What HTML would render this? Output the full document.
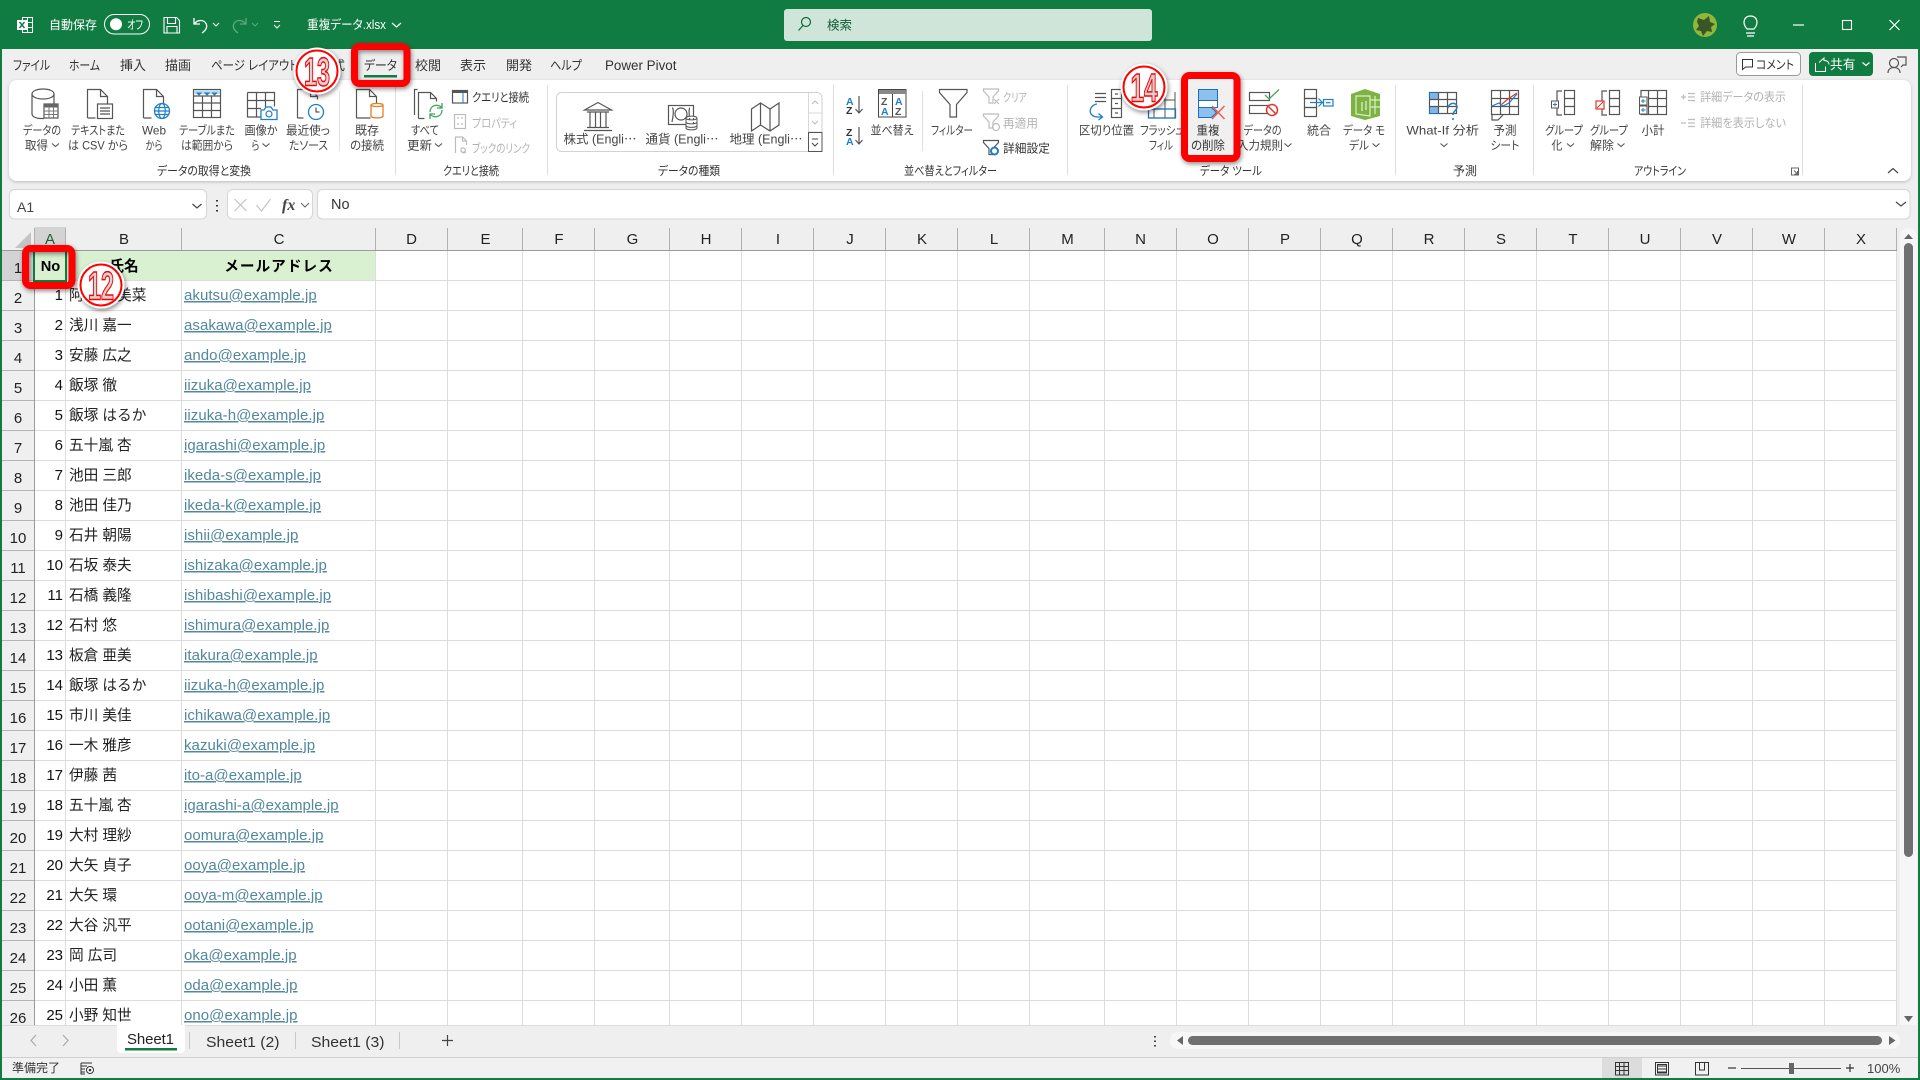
<!DOCTYPE html>
<html lang="ja"><head><meta charset="utf-8"><title>重複データ.xlsx - Excel</title>
<style>
html,body{margin:0;padding:0;background:#efefef;width:1920px;height:1080px;overflow:hidden}
svg{display:block}
text{font-family:"Liberation Sans","Noto Sans CJK JP",sans-serif;font-feature-settings:"palt";font-size:12px;fill:#333}
.c{text-anchor:middle}
.g{fill:#b3b3b3}
.tab{font-size:13px;fill:#333}
.w{fill:#fff}
.lbl{font-size:12px;fill:#444;text-anchor:middle}
.hd{font-size:15px;fill:#222;text-anchor:middle}
.rh{font-size:15px;fill:#222;text-anchor:middle}
.n{font-size:15px;fill:#111;text-anchor:end}
.nm{font-size:14.67px;fill:#222;font-feature-settings:normal}
.em{font-size:15px;fill:#52879c;text-decoration:underline;letter-spacing:.05px}
.b{font-size:14.67px;font-weight:700;fill:#000;text-anchor:middle;font-feature-settings:normal}
.i{fill:none;stroke:#555;stroke-width:1.2}
.if{fill:#fff;stroke:#555;stroke-width:1.2}
.dim{fill:none;stroke:#bdbdbd;stroke-width:1.2}
.bl{fill:none;stroke:#1e7ec8;stroke-width:1.2}
.cv{fill:none;stroke:#555;stroke-width:1.1}
.sh{font-size:15px;fill:#333}
.ann{font-family:"Liberation Sans",sans-serif;font-size:40px;font-weight:700;fill:#d4d4d4;stroke:#f00;stroke-width:1.5;text-anchor:middle;font-feature-settings:normal}
</style></head><body>
<svg width="1920" height="1080" viewBox="0 0 1920 1080" xmlns="http://www.w3.org/2000/svg">
<defs>
<filter id="s1" x="-5%" y="-20%" width="110%" height="150%"><feDropShadow dx="0" dy="1" stdDeviation="1.5" flood-color="#000" flood-opacity=".22"/></filter>
<filter id="s2" x="-30%" y="-30%" width="160%" height="160%"><feDropShadow dx="1" dy="2" stdDeviation="2.5" flood-color="#000" flood-opacity=".45"/></filter>
<clipPath id="gc"><rect x="0" y="250" width="1897" height="775"/></clipPath>
<path id="cd" class="cv" d="M-3.5-1.5 0 1.5 3.5-1.5"/>
</defs>
<rect width="1920" height="1080" fill="#efefef"/>

<!-- title bar -->
<rect width="1920" height="49" fill="#107c41"/>
<rect x="22.5" y="17.5" width="10" height="15" fill="none" stroke="#fff"/><path d="M22 22.5h11M22 27.5h11M27.5 17v16" stroke="#fff" fill="none"/>
<rect x="17" y="20" width="10" height="10" fill="#fff"/><path d="M19.5 22l5 6M24.5 22l-5 6" stroke="#107c41" stroke-width="1.4"/>
<text class="w" x="49" y="29" textLength="48" lengthAdjust="spacingAndGlyphs">自動保存</text>
<rect x="104.5" y="14.5" width="45" height="19.5" rx="9.7" fill="none" stroke="#fff"/>
<circle cx="116" cy="24.3" r="6" fill="#fff"/>
<text class="w" x="127" y="29" textLength="16" lengthAdjust="spacingAndGlyphs">オフ</text>
<path d="M164 17.5h12.5l3 3v12.5h-15.5zM167.5 17.5v6h8v-6M167 33v-6.5h10V33" fill="none" stroke="#fff" stroke-width="1.1"/>
<path d="M194 18v6h6M194.5 24c2-4 9-5 11.5-.5 2 4-.5 7-4 9.5" fill="none" stroke="#fff" stroke-width="1.3"/>
<path d="M213 23l3 3 3-3" fill="none" stroke="#fff"/>
<path d="M246 18v6h-6M245.5 24c-2-4-9-5-11.5-.5-2 4 .5 7 4 9.5" fill="none" stroke="#5da983" stroke-width="1.3"/>
<path d="M252 23l3 3 3-3" fill="none" stroke="#5da983"/>
<path d="M274 21.5h6M274 25l3 3 3-3" fill="none" stroke="#fff"/>
<text class="w" x="307" y="29" style="font-size:12.5px" textLength="79" lengthAdjust="spacingAndGlyphs">重複データ.xlsx</text>
<path d="M392 23l4.5 4 4.5-4" fill="none" stroke="#fff" stroke-width="1.2"/>
<rect x="784" y="9" width="368" height="32" rx="3" fill="#cfe5d9"/>
<circle cx="806" cy="22" r="4.5" fill="none" stroke="#0f6a39" stroke-width="1.2"/><path d="M803 25.5l-4.5 5" stroke="#0f6a39" stroke-width="1.2"/>
<text x="827" y="29.5" style="fill:#0f5c33;font-size:12.5px">検索</text>
<circle cx="1705" cy="25" r="12" fill="#8fb83a"/><path d="M1698 18l6 2 5-4 1 6 5 2-4 3 1 5-5-1-4 5-2-5-5-1 3-4-2-4zM1701 29l3-7 4 7z" fill="#3a5626"/>
<path d="M1746 33h9M1747 36h7M1747 29c-6-7-2-13 3.5-13s9.5 6 3.5 13z" fill="none" stroke="#fff" stroke-width="1.2"/>
<path d="M1793 25h11" stroke="#fff" stroke-width="1.2"/>
<rect x="1842.5" y="20.5" width="9" height="9" fill="none" stroke="#fff" stroke-width="1.1"/>
<path d="M1889.5 20l10 10M1899.5 20l-10 10" stroke="#fff" stroke-width="1.2"/>

<!-- tabs -->
<text class="tab" x="13" y="70" textLength="37" lengthAdjust="spacingAndGlyphs">ファイル</text>
<text class="tab" x="69" y="70" textLength="31" lengthAdjust="spacingAndGlyphs">ホーム</text>
<text class="tab" x="120" y="70" textLength="26" lengthAdjust="spacingAndGlyphs">挿入</text>
<text class="tab" x="165" y="70" textLength="26" lengthAdjust="spacingAndGlyphs">描画</text>
<text class="tab" x="211" y="70" textLength="87" lengthAdjust="spacingAndGlyphs">ページ レイアウト</text>
<text class="tab" x="319" y="70" textLength="26" lengthAdjust="spacingAndGlyphs">数式</text>
<text class="tab" x="364" y="70" textLength="33" lengthAdjust="spacingAndGlyphs">データ</text>
<rect x="364" y="75" width="33" height="2.5" fill="#107c41"/>
<text class="tab" x="415" y="70" textLength="26" lengthAdjust="spacingAndGlyphs">校閲</text>
<text class="tab" x="460" y="70" textLength="26" lengthAdjust="spacingAndGlyphs">表示</text>
<text class="tab" x="506" y="70" textLength="26" lengthAdjust="spacingAndGlyphs">開発</text>
<text class="tab" x="550" y="70" textLength="32" lengthAdjust="spacingAndGlyphs">ヘルプ</text>
<text x="605" y="70" style="font-size:13.4px;fill:#333">Power Pivot</text>
<rect x="1736.5" y="52.5" width="64" height="23" rx="4" fill="#fff" stroke="#9a9a9a"/>
<path d="M1742.5 59.5h10v7.5h-7l-3 2.5z" fill="none" stroke="#333"/>
<text x="1756" y="69" style="font-size:12.5px" textLength="38" lengthAdjust="spacingAndGlyphs">コメント</text>
<rect x="1809" y="52" width="64" height="24" rx="4" fill="#107c41"/>
<path d="M1819 62.5l5-4.5v2.5c3 0 5 1 5 4M1815.5 63v8.5h10v-5" fill="none" stroke="#fff"/>
<text class="w" x="1830" y="69" style="font-size:13px" textLength="25.5" lengthAdjust="spacingAndGlyphs">共有</text>
<path d="M1862.5 62.5l3.5 3 3.5-3" fill="none" stroke="#fff" stroke-width="1.2"/>
<circle cx="1894" cy="63" r="4.5" class="i"/><path d="M1888 73c0-4 3-5.5 6-5.5s6 1.5 6 5.5M1897 57h9v8h-3l-2 2" class="i"/>

<!-- ribbon -->
<rect x="9" y="80" width="1902" height="101" rx="8" fill="#fff" filter="url(#s1)"/>
<path d="M395.5 85v90M547.5 85v90M833.5 85v90M1067.5 85v90M1395.5 85v90M1533.5 85v90M1802.5 85v90" stroke="#dcdcdc"/>
<path d="M339.5 91v60M922.5 91v60" stroke="#e0e0e0"/>

<!-- get data icons -->
<path d="M32 94v20c0 3 5 4.5 8 4.5h4M32 94c0-3 5-5 11-5s11 2 11 5v10M32 94c0 3 5 5 11 5s11-2 11-5" class="i"/>
<rect x="44" y="104" width="14" height="14" class="if"/><rect x="44" y="104" width="14" height="3.5" fill="#666"/><path d="M44 111h14M44 114.5h14M49 107v11M53.5 107v11" stroke="#777" fill="none"/>
<path d="M87.5 118V89.5h13l7 7v7M100.5 89.5v7h7M87.5 118h8" class="i"/>
<rect x="96" y="104" width="17" height="14" fill="#fff"/><rect x="97.5" y="104" width="15" height="14.5" class="i"/><path d="M100 108h10M100 111h10M100 114h10" class="i"/>
<path d="M143.5 118V89.5h13l7 7v7M156.5 89.5v7h7M143.5 118h8" class="i"/>
<circle cx="162" cy="111" r="7.5" fill="#fff" stroke="#1e7ec8" stroke-width="1.3"/><ellipse cx="162" cy="111" rx="3.3" ry="7.5" class="bl"/><path d="M154.5 111h15M155.5 107.5h13M155.5 114.5h13" class="bl"/>
<rect x="193.5" y="89.5" width="27" height="28" class="i"/><rect x="194" y="90" width="26" height="4" fill="#bcdcf0"/>
<path d="M196.5 92.5l2.5 2.5 2.5-2.5M204.5 92.5l2.5 2.5 2.5-2.5M212 92.5l2.5 2.5 2.5-2.5" fill="#1e7ec8" stroke="#1e7ec8"/>
<path d="M193 96h28M193 103h28M193 110.5h28M202.5 96v22M211.5 96v22" class="i"/>
<path d="M247.5 92.5h27v14M247.5 92.5v24.5h14M247 100.5h28M247 108.5h14M256.5 92v25M265.5 92v15" class="i"/>
<path d="M261 110h3l2-3h5l2 3h4v9.5h-16z" fill="#fff" stroke="#1e7ec8" stroke-width="1.3"/><circle cx="269" cy="114" r="3" class="bl"/>
<path d="M297.5 118V89.5h13l7 7v3M310.5 89.5v7h7M297.5 118h6" class="i"/>
<circle cx="316" cy="112" r="7.5" fill="#fff" stroke="#1e7ec8" stroke-width="1.3"/><path d="M316 107.5v4.5h3.5" stroke="#333" fill="none"/>
<path d="M356.5 118V89.5h13l7 7v7M369.5 89.5v7h7M356.5 118h14" class="i"/>
<path d="M371 105c0-2 12-2 12 0v11c0 2.5-12 2.5-12 0z" fill="#fff" stroke="#e67e22" stroke-width="1.3"/><path d="M371 105c0 2 12 2 12 0" stroke="#e67e22" fill="none" stroke-width="1.3"/>
<path d="M414.5 115V89.5h3" class="i"/><path d="M418.5 118.5V92.5h12l6 6v3M430.5 92.5v6h6M418.5 118.5h6" class="i"/>
<path d="M430 112c0-7 8-9 12-4M442 110c0 7-8 9-12 4M442 103v5h-5M430 119v-5h5" fill="none" stroke="#3aa655" stroke-width="1.3"/>

<text class="lbl" x="42" y="134.5" textLength="38" lengthAdjust="spacingAndGlyphs">データの</text><text class="lbl" x="36.5" y="149.5" textLength="23" lengthAdjust="spacingAndGlyphs">取得</text><use href="#cd" x="55.5" y="145"/>
<text class="lbl" x="98" y="134.5" textLength="54" lengthAdjust="spacingAndGlyphs">テキストまた</text><text class="lbl" x="98" y="149.5" textLength="60" lengthAdjust="spacingAndGlyphs">は CSV から</text>
<text class="lbl" x="154" y="134.5" textLength="24" lengthAdjust="spacingAndGlyphs">Web</text><text class="lbl" x="154" y="149.5" textLength="17" lengthAdjust="spacingAndGlyphs">から</text>
<text class="lbl" x="207" y="134.5" textLength="56" lengthAdjust="spacingAndGlyphs">テーブルまた</text><text class="lbl" x="207" y="149.5" textLength="52" lengthAdjust="spacingAndGlyphs">は範囲から</text>
<text class="lbl" x="261" y="134.5" textLength="33" lengthAdjust="spacingAndGlyphs">画像か</text><text class="lbl" x="255.5" y="149.5" textLength="8" lengthAdjust="spacingAndGlyphs">ら</text><use href="#cd" x="266" y="145"/>
<text class="lbl" x="308" y="134.5" textLength="44" lengthAdjust="spacingAndGlyphs">最近使っ</text><text class="lbl" x="308.5" y="149.5" textLength="39" lengthAdjust="spacingAndGlyphs">たソース</text>
<text class="lbl" x="367" y="134.5" textLength="24" lengthAdjust="spacingAndGlyphs">既存</text><text class="lbl" x="367" y="149.5" textLength="34" lengthAdjust="spacingAndGlyphs">の接続</text>
<text class="lbl" x="425" y="134.5" textLength="28" lengthAdjust="spacingAndGlyphs">すべて</text><text class="lbl" x="419.5" y="149.5" textLength="25" lengthAdjust="spacingAndGlyphs">更新</text><use href="#cd" x="438.5" y="145"/>
<rect x="452.5" y="90.5" width="15" height="12.5" class="i"/><rect x="452.5" y="90.5" width="15" height="2.5" fill="#555"/><path d="M463 93v10" stroke="#1e7ec8"/>
<text x="472" y="101.5" textLength="57" lengthAdjust="spacingAndGlyphs">クエリと接続</text>
<rect x="454.5" y="114.5" width="11" height="14" class="dim"/><path d="M457 118h2M457 124h2M461 118h2M461 124h2" class="dim"/>
<text class="g" x="472" y="127.5" textLength="45" lengthAdjust="spacingAndGlyphs">プロパティ</text>
<path d="M455.5 153v-16h7l4 4v4M462.5 137v4h4M462 152c2 1 4-1 3-3s-4-1-4 1 2 4 5 2" class="dim"/>
<text class="g" x="472" y="152.5" textLength="58" lengthAdjust="spacingAndGlyphs">ブックのリンク</text>
<text class="c" x="204" y="175" textLength="94" lengthAdjust="spacingAndGlyphs">データの取得と変換</text>
<text class="c" x="471" y="175" textLength="56" lengthAdjust="spacingAndGlyphs">クエリと接続</text>

<!-- data types gallery -->
<rect x="556.5" y="92.5" width="265.5" height="59" rx="5" fill="#fff" stroke="#d2d2d2"/>
<path d="M808.5 93v58M808 113h14M808 132h14" stroke="#d8d8d8"/>
<path d="M812 104l3-3 3 3M812 121l3 3 3-3" fill="none" stroke="#bbb"/>
<rect x="808.5" y="132.5" width="13.5" height="19" fill="#fff" stroke="#555"/><path d="M812 139h6M812 143l3 3 3-3" fill="none" stroke="#444"/>
<path d="M584.5 110l13.5-7.5 13.5 7.5zM587 112h22M587 127.5h22M584 130.5h28M590 112v15M595.5 112v15M600.5 112v15M606 112v15" class="i"/>
<rect x="668.5" y="105.5" width="25" height="19" class="i"/><path d="M672 108c3 0 0 14 0 14M690 108c-2 0 0 14 0 14" class="i"/><circle cx="681" cy="114" r="6" class="i"/>
<path d="M686 118c0-2.5 11-2.5 11 0v10c0 2.5-11 2.5-11 0zM686 118c0 2.5 11 2.5 11 0M686 122c0 2.5 11 2.5 11 0M686 125.5c0 2.5 11 2.5 11 0" fill="#fff" stroke="#555"/>
<path d="M751.5 109l9-6 9.5 6 9-6v22l-9 6-9.5-6-9 6zM760.5 103v22M770 109v22" class="i"/>
<text class="lbl" x="600" y="143.5" style="font-size:12.5px">株式 (Engli⋯</text>
<text class="lbl" x="682" y="143.5" style="font-size:12.5px">通貨 (Engli⋯</text>
<text class="lbl" x="766" y="143.5" style="font-size:12.5px">地理 (Engli⋯</text>
<text class="c" x="689" y="175" textLength="62" lengthAdjust="spacingAndGlyphs">データの種類</text>

<!-- sort & filter -->
<text x="846" y="105" style="font-size:10.5px;fill:#1e7ec8;font-weight:700">A</text><text x="846" y="114" style="font-size:10.5px;fill:#333;font-weight:700">Z</text>
<path d="M859 96v17M855.5 109l3.5 4 3.5-4" class="i"/>
<text x="846" y="136" style="font-size:10.5px;fill:#333;font-weight:700">Z</text><text x="846" y="145" style="font-size:10.5px;fill:#1e7ec8;font-weight:700">A</text>
<path d="M859 127v17M855.5 140l3.5 4 3.5-4" class="i"/>
<rect x="878.5" y="89.5" width="27.5" height="27.5" fill="#fff" stroke="#444"/><rect x="879" y="90" width="27" height="4" fill="#888"/><path d="M892.5 94v23" stroke="#444"/>
<text x="881" y="105" style="font-size:10.5px;font-weight:700;fill:#555">Z</text><text x="881" y="115" style="font-size:10.5px;font-weight:700;fill:#1e7ec8">A</text>
<text x="895" y="105" style="font-size:10.5px;font-weight:700;fill:#1e7ec8">A</text><text x="895" y="115" style="font-size:10.5px;font-weight:700;fill:#555">Z</text>
<text class="lbl" x="892" y="134.5" textLength="43" lengthAdjust="spacingAndGlyphs">並べ替え</text>
<path d="M939.5 89.5h27.5v3l-10.5 12v12.5h-6.5v-12.5l-10.5-12z" class="if"/>
<text class="lbl" x="952" y="134.5" textLength="42" lengthAdjust="spacingAndGlyphs">フィルター</text>
<path d="M983.5 89h15v2l-5.5 6v6h-4v-6l-5.5-6z" class="dim"/><path d="M994 99l5 5M999 99l-5 5" class="dim"/>
<text class="g" x="1003" y="101.5" textLength="24" lengthAdjust="spacingAndGlyphs">クリア</text>
<path d="M983.5 114h15v2l-5.5 6v6h-4v-6l-5.5-6z" class="dim"/><circle cx="996" cy="127" r="3.5" class="dim"/>
<text class="g" x="1003" y="127.5" textLength="35" lengthAdjust="spacingAndGlyphs">再適用</text>
<path d="M983.5 140.5h15v2l-5.5 6v6h-4v-6l-5.5-6z" class="i"/><circle cx="994.5" cy="151" r="3.5" fill="#fff" stroke="#1e7ec8" stroke-width="2"/>
<text x="1003" y="152.5" textLength="47" lengthAdjust="spacingAndGlyphs">詳細設定</text>
<text class="c" x="950.5" y="175" textLength="93" lengthAdjust="spacingAndGlyphs">並べ替えとフィルター</text>

<!-- data tools -->
<path d="M1095 93.5h11M1095 97.5h11M1095 101.5h11" class="i"/>
<path d="M1097 104c-8 1-10 12 0 13h5M1098.5 113.5l4 3.5-4 3" fill="none" stroke="#1e7ec8" stroke-width="1.3"/>
<rect x="1111.5" y="89.5" width="10" height="28" class="i"/><path d="M1111 98.5h11M1111 108.5h11M1115 94h3M1115 103.5h3M1115 113h3" class="i"/>
<text class="lbl" x="1106.5" y="134.5" textLength="55" lengthAdjust="spacingAndGlyphs">区切り位置</text>
<path d="M1154 92v26M1165 92v26M1154 100h21M1154 109h21M1175 92v26" fill="none" stroke="#555"/><rect x="1148.5" y="109" width="27" height="9" fill="none" stroke="#1d6fb8" stroke-width="1.3"/>
<text class="lbl" x="1162" y="134.5" textLength="44" lengthAdjust="spacingAndGlyphs">フラッシュ</text><text class="lbl" x="1161" y="149.5" textLength="24" lengthAdjust="spacingAndGlyphs">フィル</text>

<!-- validation / consolidate / model -->
<rect x="1249.5" y="92.5" width="20" height="8" class="i"/><path d="M1265 95l4 4 10-9.5" fill="none" stroke="#4aa564" stroke-width="1.3"/>
<rect x="1249.5" y="105.5" width="20" height="8" class="i"/><circle cx="1272" cy="110" r="5.5" fill="#fff" stroke="#e0352b" stroke-width="1.5"/><path d="M1268.5 106.5l7 7" stroke="#e0352b" stroke-width="1.5"/>
<text class="lbl" x="1262.5" y="134.5" textLength="38" lengthAdjust="spacingAndGlyphs">データの</text><text class="lbl" x="1260" y="149.5" textLength="46" lengthAdjust="spacingAndGlyphs">入力規則</text><use href="#cd" x="1288" y="145"/>
<rect x="1304.5" y="89.5" width="12" height="9" class="i"/><rect x="1304.5" y="98.5" width="12" height="9" class="i"/><rect x="1304.5" y="107.5" width="12" height="9" class="i"/>
<path d="M1310 102.5h12M1318.5 98.5l4 4-4 4" class="bl"/><rect x="1323.5" y="99.5" width="9.5" height="6.5" class="bl"/><path d="M1326 102.7h4.5" class="bl"/>
<text class="lbl" x="1319" y="134.5" textLength="24" lengthAdjust="spacingAndGlyphs">統合</text>
<path d="M1351 94l14-5 15 5v22l-15 4-14-4z" fill="#7cb342"/><path d="M1356 96l14 0v20l-14-2zM1370 100h10M1370 107h10M1375 96v18" fill="none" stroke="#dcedc8" stroke-width="1.2"/><path d="M1362 102v9M1366 101v9" stroke="#fff"/>
<text class="lbl" x="1364" y="134.5" textLength="42" lengthAdjust="spacingAndGlyphs">データ モ</text><text class="lbl" x="1359" y="149.5" textLength="20" lengthAdjust="spacingAndGlyphs">デル</text><use href="#cd" x="1376" y="145"/>
<text class="c" x="1231" y="175" textLength="62" lengthAdjust="spacingAndGlyphs">データ ツール</text>

<!-- forecast -->
<rect x="1429.5" y="92.5" width="27" height="21" class="i"/><rect x="1429.5" y="92.5" width="9" height="7" fill="#7fb6e6" stroke="#1e6fb8"/><rect x="1429.5" y="106.5" width="9" height="7" fill="#7fb6e6" stroke="#1e6fb8"/><path d="M1429 99.5h27M1429 106.5h27M1438.5 92v21M1447.5 92v21" class="i"/>
<path d="M1448 108c1-6 9-6 9-1 0 4-4 3.5-4 8M1453 118v2" fill="none" stroke="#1e7ec8" stroke-width="1.5"/>
<text class="lbl" x="1442.7" y="134.5" textLength="72.5" lengthAdjust="spacingAndGlyphs">What-If 分析</text><use href="#cd" x="1444" y="145"/>
<rect x="1491.5" y="90.5" width="27" height="24" class="i"/><path d="M1491 98.5h27M1491 106.5h27M1500.5 90v24M1509.5 90v24M1492 115v5h6l5-5" class="i"/>
<path d="M1492 106l7-3 4 3 6-3 8-9" fill="none" stroke="#1e7ec8" stroke-width="1.2"/><path d="M1502 104l6-5 9-6" fill="none" stroke="#e0352b" stroke-width="1.2"/>
<text class="lbl" x="1505" y="134.5" textLength="23" lengthAdjust="spacingAndGlyphs">予測</text><text class="lbl" x="1505" y="149.5" textLength="29" lengthAdjust="spacingAndGlyphs">シート</text>
<text class="c" x="1465" y="175" textLength="24" lengthAdjust="spacingAndGlyphs">予測</text>

<!-- outline -->
<path d="M1562 91h-5v10M1557 108v7h5" class="i"/><rect x="1551.5" y="101" width="7" height="7" fill="#fff" stroke="#555"/><path d="M1553 104.5h4M1555 102.5v4" stroke="#1e7ec8"/>
<rect x="1564.5" y="90.5" width="10" height="24" class="i"/><path d="M1564 98.5h11M1564 106.5h11" class="i"/>
<text class="lbl" x="1564" y="134.5" textLength="38" lengthAdjust="spacingAndGlyphs">グループ</text><text class="lbl" x="1557" y="149.5" textLength="11" lengthAdjust="spacingAndGlyphs">化</text><use href="#cd" x="1570.5" y="145"/>
<path d="M1607 91h-5v10M1602 108v7h5" class="i"/><rect x="1596" y="101" width="8" height="8" fill="#fff" stroke="#e0352b" stroke-width="1.2"/><path d="M1597 108l6-6" stroke="#e0352b"/>
<rect x="1609.5" y="90.5" width="10" height="24" class="i"/><path d="M1609 98.5h11M1609 106.5h11" class="i"/>
<text class="lbl" x="1609" y="134.5" textLength="38" lengthAdjust="spacingAndGlyphs">グループ</text><text class="lbl" x="1602" y="149.5" textLength="24" lengthAdjust="spacingAndGlyphs">解除</text><use href="#cd" x="1621" y="145"/>
<path d="M1648 90.5h-7v6M1641 106v8.5h7" class="i"/><rect x="1639.5" y="97" width="7.5" height="8" fill="#fff" stroke="#555"/><rect x="1639.5" y="106" width="7.5" height="8" fill="#fff" stroke="#555"/>
<path d="M1641 101h4.5M1643 99v4M1641 110h4.5M1643 108v4" stroke="#1e7ec8"/>
<rect x="1648.5" y="90.5" width="18" height="24" class="i"/><path d="M1648 98.5h18M1648 106.5h18M1657.5 90v24" class="i"/>
<text class="lbl" x="1653" y="134.5" textLength="23" lengthAdjust="spacingAndGlyphs">小計</text>
<path d="M1681 97h5M1683.5 94.5v5M1688 93.5h7M1688 97h7M1688 100.5h7" class="dim"/>
<text class="g" x="1700" y="101" textLength="86" lengthAdjust="spacingAndGlyphs">詳細データの表示</text>
<path d="M1681 123h5M1688 119.5h7M1688 123h7M1688 126.5h7" class="dim"/>
<text class="g" x="1700" y="127" textLength="86" lengthAdjust="spacingAndGlyphs">詳細を表示しない</text>
<text class="c" x="1660" y="175" textLength="52" lengthAdjust="spacingAndGlyphs">アウトライン</text>
<path d="M1791.5 175v-7h7v7zM1794 170.5l3.5 3.5M1797.5 171v3h-3" fill="none" stroke="#666"/>
<path d="M1888 173l5-4.5 5 4.5" fill="none" stroke="#444" stroke-width="1.2"/>

<!-- formula bar -->
<rect x="9.5" y="189.5" width="197" height="29.5" rx="5" fill="#fff" stroke="#d6d6d6"/>
<text x="17" y="212" style="font-size:14px;fill:#444">A1</text>
<path d="M192.5 204l4.5 4 4.5-4" fill="none" stroke="#444" stroke-width="1.2"/>
<path d="M217 200v1.5M217 205v1.5M217 210v1.5" stroke="#333" stroke-width="2"/>
<rect x="227.5" y="189.5" width="85" height="29.5" rx="5" fill="#fff" stroke="#d6d6d6"/>
<path d="M234.5 199l12 12M246.5 199l-12 12" stroke="#c4c4c4" stroke-width="1.2"/>
<path d="M256.5 205l5 6 9-12" fill="none" stroke="#c4c4c4" stroke-width="1.2"/>
<text x="282" y="210" style="font-family:'Liberation Serif',serif;font-style:italic;font-weight:700;font-size:16px;fill:#444;font-feature-settings:normal">fx</text>
<path d="M301 203l4 4 4-4" fill="none" stroke="#666"/>
<rect x="317.5" y="189.5" width="1592.5" height="29.5" rx="5" fill="#fff" stroke="#d6d6d6"/>
<text x="331" y="209" style="font-size:14.5px;fill:#333">No</text>
<path d="M1896 202l5 4 5-4" fill="none" stroke="#444" stroke-width="1.2"/>

<!-- col headers -->
<rect x="2" y="227" width="1895" height="24" fill="#efefef"/>
<rect x="35" y="227" width="31" height="23" fill="#d3d3d3"/>
<rect x="34" y="248" width="32" height="2" fill="#107c41"/>
<path d="M15 248l16-16v16z" fill="#c4c4c4"/>
<path d="M34.5 228V250M65.5 228V250M181.5 228V250M375.5 228V250M447.5 228V250M522.5 228V250M594.5 228V250M669.5 228V250M741.5 228V250M813.5 228V250M885.5 228V250M957.5 228V250M1029.5 228V250M1104.5 228V250M1176.5 228V250M1248.5 228V250M1320.5 228V250M1392.5 228V250M1464.5 228V250M1536.5 228V250M1608.5 228V250M1680.5 228V250M1752.5 228V250M1824.5 228V250M1896.5 228V250" stroke="#b0b0b0"/>
<rect x="2" y="250" width="1895" height="1" fill="#9a9a9a"/>
<text class="hd" x="50" y="244" style="fill:#1a5f3a">A</text><text class="hd" x="124" y="244">B</text><text class="hd" x="279" y="244">C</text><text class="hd" x="411.5" y="244">D</text><text class="hd" x="485.5" y="244">E</text><text class="hd" x="559" y="244">F</text><text class="hd" x="632.5" y="244">G</text><text class="hd" x="706" y="244">H</text><text class="hd" x="778" y="244">I</text><text class="hd" x="850" y="244">J</text><text class="hd" x="922" y="244">K</text><text class="hd" x="994" y="244">L</text><text class="hd" x="1067.5" y="244">M</text><text class="hd" x="1140.5" y="244">N</text><text class="hd" x="1213" y="244">O</text><text class="hd" x="1285" y="244">P</text><text class="hd" x="1357" y="244">Q</text><text class="hd" x="1429" y="244">R</text><text class="hd" x="1501" y="244">S</text><text class="hd" x="1573" y="244">T</text><text class="hd" x="1645" y="244">U</text><text class="hd" x="1717" y="244">V</text><text class="hd" x="1789" y="244">W</text><text class="hd" x="1861" y="244">X</text>

<!-- grid -->
<g clip-path="url(#gc)">
<rect x="35" y="251" width="1862" height="775" fill="#fff"/>
<rect x="35" y="251" width="341" height="29.5" fill="#d9f1d0"/>
<path d="M65.5 281V1025M181.5 281V1025M375.5 251V1025M447.5 251V1025M522.5 251V1025M594.5 251V1025M669.5 251V1025M741.5 251V1025M813.5 251V1025M885.5 251V1025M957.5 251V1025M1029.5 251V1025M1104.5 251V1025M1176.5 251V1025M1248.5 251V1025M1320.5 251V1025M1392.5 251V1025M1464.5 251V1025M1536.5 251V1025M1608.5 251V1025M1680.5 251V1025M1752.5 251V1025M1824.5 251V1025M1896.5 251V1025" stroke="#dcdcdc"/>
<path d="M35 280.5H1897M35 310.5H1897M35 340.5H1897M35 370.5H1897M35 400.5H1897M35 430.5H1897M35 460.5H1897M35 490.5H1897M35 520.5H1897M35 550.5H1897M35 580.5H1897M35 610.5H1897M35 640.5H1897M35 670.5H1897M35 700.5H1897M35 730.5H1897M35 760.5H1897M35 790.5H1897M35 820.5H1897M35 850.5H1897M35 880.5H1897M35 910.5H1897M35 940.5H1897M35 970.5H1897M35 1000.5H1897" stroke="#dcdcdc"/>
<!-- row header -->
<rect x="2" y="251" width="32" height="775" fill="#efefef"/>
<rect x="2" y="251" width="32" height="30" fill="#d3d3d3"/>
<path d="M2 280.5H34M2 310.5H34M2 340.5H34M2 370.5H34M2 400.5H34M2 430.5H34M2 460.5H34M2 490.5H34M2 520.5H34M2 550.5H34M2 580.5H34M2 610.5H34M2 640.5H34M2 670.5H34M2 700.5H34M2 730.5H34M2 760.5H34M2 790.5H34M2 820.5H34M2 850.5H34M2 880.5H34M2 910.5H34M2 940.5H34M2 970.5H34M2 1000.5H34" stroke="#b5b5b5"/>
<rect x="34" y="251" width="1" height="775" fill="#9a9a9a"/>
<text class="rh" x="18" y="273">1</text><text class="rh" x="18" y="303">2</text><text class="rh" x="18" y="333">3</text><text class="rh" x="18" y="363">4</text><text class="rh" x="18" y="393">5</text><text class="rh" x="18" y="423">6</text><text class="rh" x="18" y="453">7</text><text class="rh" x="18" y="483">8</text><text class="rh" x="18" y="513">9</text><text class="rh" x="18" y="543">10</text><text class="rh" x="18" y="573">11</text><text class="rh" x="18" y="603">12</text><text class="rh" x="18" y="633">13</text><text class="rh" x="18" y="663">14</text><text class="rh" x="18" y="693">15</text><text class="rh" x="18" y="723">16</text><text class="rh" x="18" y="753">17</text><text class="rh" x="18" y="783">18</text><text class="rh" x="18" y="813">19</text><text class="rh" x="18" y="843">20</text><text class="rh" x="18" y="873">21</text><text class="rh" x="18" y="903">22</text><text class="rh" x="18" y="933">23</text><text class="rh" x="18" y="963">24</text><text class="rh" x="18" y="993">25</text><text class="rh" x="18" y="1023">26</text>
<!-- header cells -->
<text class="b" x="50.5" y="271">No</text>
<text class="b" x="124" y="271">氏名</text>
<text class="b" x="279" y="271" style="letter-spacing:1px">メールアドレス</text>
<!-- col A -->
<text class="n" x="63" y="300">1</text><text class="n" x="63" y="330">2</text><text class="n" x="63" y="360">3</text><text class="n" x="63" y="390">4</text><text class="n" x="63" y="420">5</text><text class="n" x="63" y="450">6</text><text class="n" x="63" y="480">7</text><text class="n" x="63" y="510">8</text><text class="n" x="63" y="540">9</text><text class="n" x="63" y="570">10</text><text class="n" x="63" y="600">11</text><text class="n" x="63" y="630">12</text><text class="n" x="63" y="660">13</text><text class="n" x="63" y="690">14</text><text class="n" x="63" y="720">15</text><text class="n" x="63" y="750">16</text><text class="n" x="63" y="780">17</text><text class="n" x="63" y="810">18</text><text class="n" x="63" y="840">19</text><text class="n" x="63" y="870">20</text><text class="n" x="63" y="900">21</text><text class="n" x="63" y="930">22</text><text class="n" x="63" y="960">23</text><text class="n" x="63" y="990">24</text><text class="n" x="63" y="1020">25</text>
<!-- col B -->
<text class="nm" x="69" y="300">阿久津 美菜</text><text class="nm" x="69" y="330">浅川 嘉一</text><text class="nm" x="69" y="360">安藤 広之</text><text class="nm" x="69" y="390">飯塚 徹</text><text class="nm" x="69" y="420">飯塚 はるか</text><text class="nm" x="69" y="450">五十嵐 杏</text><text class="nm" x="69" y="480">池田 三郎</text><text class="nm" x="69" y="510">池田 佳乃</text><text class="nm" x="69" y="540">石井 朝陽</text><text class="nm" x="69" y="570">石坂 泰夫</text><text class="nm" x="69" y="600">石橋 義隆</text><text class="nm" x="69" y="630">石村 悠</text><text class="nm" x="69" y="660">板倉 亜美</text><text class="nm" x="69" y="690">飯塚 はるか</text><text class="nm" x="69" y="720">市川 美佳</text><text class="nm" x="69" y="750">一木 雅彦</text><text class="nm" x="69" y="780">伊藤 茜</text><text class="nm" x="69" y="810">五十嵐 杏</text><text class="nm" x="69" y="840">大村 理紗</text><text class="nm" x="69" y="870">大矢 貞子</text><text class="nm" x="69" y="900">大矢 環</text><text class="nm" x="69" y="930">大谷 汎平</text><text class="nm" x="69" y="960">岡 広司</text><text class="nm" x="69" y="990">小田 薫</text><text class="nm" x="69" y="1020">小野 知世</text>
<!-- col C -->
<text class="em" x="184" y="300">akutsu@example.jp</text><text class="em" x="184" y="330">asakawa@example.jp</text><text class="em" x="184" y="360">ando@example.jp</text><text class="em" x="184" y="390">iizuka@example.jp</text><text class="em" x="184" y="420">iizuka-h@example.jp</text><text class="em" x="184" y="450">igarashi@example.jp</text><text class="em" x="184" y="480">ikeda-s@example.jp</text><text class="em" x="184" y="510">ikeda-k@example.jp</text><text class="em" x="184" y="540">ishii@example.jp</text><text class="em" x="184" y="570">ishizaka@example.jp</text><text class="em" x="184" y="600">ishibashi@example.jp</text><text class="em" x="184" y="630">ishimura@example.jp</text><text class="em" x="184" y="660">itakura@example.jp</text><text class="em" x="184" y="690">iizuka-h@example.jp</text><text class="em" x="184" y="720">ichikawa@example.jp</text><text class="em" x="184" y="750">kazuki@example.jp</text><text class="em" x="184" y="780">ito-a@example.jp</text><text class="em" x="184" y="810">igarashi-a@example.jp</text><text class="em" x="184" y="840">oomura@example.jp</text><text class="em" x="184" y="870">ooya@example.jp</text><text class="em" x="184" y="900">ooya-m@example.jp</text><text class="em" x="184" y="930">ootani@example.jp</text><text class="em" x="184" y="960">oka@example.jp</text><text class="em" x="184" y="990">oda@example.jp</text><text class="em" x="184" y="1020">ono@example.jp</text>
</g>
<!-- selected A1 -->
<rect x="34" y="251" width="32" height="30" fill="none" stroke="#107c41" stroke-width="2"/>

<!-- v scroll -->
<rect x="1900" y="228" width="17" height="804" rx="8" fill="#f6f6f6"/>
<path d="M1904 239l4.5-5 4.5 5z" fill="#666"/>
<rect x="1904" y="243" width="9" height="614" rx="4.5" fill="#707070"/>
<path d="M1904 1016h9l-4.5 6z" fill="#666"/>

<!-- sheet tabs -->
<rect x="2" y="1025" width="1916" height="32" fill="#efefef"/>
<rect x="2" y="1025" width="1895" height="1" fill="#dcdcdc"/>
<path d="M36 1035l-5 5.5 5 5.5M63 1035l5 5.5-5 5.5" fill="none" stroke="#aaa" stroke-width="1.2"/>
<path d="M117 1025h68v24a4 4 0 0 1-4 4h-60a4 4 0 0 1-4-4z" fill="#fff"/>
<text x="127" y="1044" class="sh" style="fill:#222" textLength="47">Sheet1</text>
<rect x="125" y="1048" width="52" height="2.5" fill="#107c41"/>
<path d="M189.5 1032v17M295.5 1032v17M399.5 1032v17" stroke="#c8c8c8"/>
<text x="206" y="1047" class="sh" textLength="73.5" lengthAdjust="spacingAndGlyphs">Sheet1 (2)</text>
<text x="311" y="1047" class="sh" textLength="73.5" lengthAdjust="spacingAndGlyphs">Sheet1 (3)</text>
<path d="M442 1040.5h11M447.5 1035v11" stroke="#444" stroke-width="1.2"/>
<path d="M1155 1036v1.5M1155 1040.5v1.5M1155 1045v1.5" stroke="#444" stroke-width="2"/>
<rect x="1170" y="1032" width="730" height="17" rx="8" fill="#f7f7f7"/>
<path d="M1183 1036v9l-6-4.5z" fill="#666"/>
<rect x="1188" y="1036" width="694" height="9" rx="4.5" fill="#707070"/>
<path d="M1889 1036v9l6.5-4.5z" fill="#666"/>

<!-- status bar -->
<rect x="2" y="1057" width="1916" height="1" fill="#cfcfcf"/>
<rect x="2" y="1058" width="1916" height="20" fill="#f1f1f1"/>
<text x="12" y="1072" style="font-size:12px;fill:#333" textLength="48" lengthAdjust="spacingAndGlyphs">準備完了</text>
<path d="M81 1063h11M81 1066h6M81 1069h4M81 1072h4M81 1063v11h4" fill="none" stroke="#333"/><circle cx="90" cy="1070" r="3.5" fill="#fff" stroke="#333"/><circle cx="90" cy="1070" r="1.3" fill="#333"/>
<rect x="1602" y="1058" width="40" height="20" fill="#dcdcdc"/>
<rect x="1615.5" y="1062.5" width="13" height="12.5" fill="none" stroke="#333"/><path d="M1615 1066.5h14M1615 1070.5h14M1619.5 1062v13M1624 1062v13" stroke="#333"/>
<rect x="1655.5" y="1062.5" width="13" height="12.5" fill="none" stroke="#333"/><path d="M1658 1066h8M1658 1069h8M1658 1072h8" stroke="#333" fill="none"/><rect x="1657.5" y="1064.5" width="9" height="8.5" fill="none" stroke="#333"/>
<rect x="1695.5" y="1062.5" width="13" height="12.5" fill="none" stroke="#333"/><path d="M1699.5 1062.5v7.5h5v-7.5" fill="none" stroke="#333"/>
<path d="M1728 1068h8" stroke="#333" stroke-width="1.2"/>
<path d="M1741 1068.5h100" stroke="#555"/>
<rect x="1789" y="1063" width="5" height="11" fill="#666"/>
<path d="M1846 1068h8M1850 1064v8" stroke="#333" stroke-width="1.2"/>
<text x="1867" y="1073" style="font-size:13px;fill:#444">100%</text>

<!-- window border -->
<rect x="0" y="49" width="2" height="1031" fill="#107c41"/>
<rect x="1918" y="49" width="2" height="1031" fill="#107c41"/>
<rect x="0" y="1078" width="1920" height="2" fill="#107c41"/>

<!-- annotations -->
<rect x="354.5" y="46.5" width="52.5" height="37" rx="5" fill="none" stroke="#f00" stroke-width="7" filter="url(#s2)"/>
<g filter="url(#s2)"><rect x="1184.5" y="75.5" width="52.5" height="83" rx="5" fill="#f0f0f0" stroke="#f00" stroke-width="7"/></g>
<rect x="1198.5" y="89.5" width="19" height="11" fill="#8cc0ee" stroke="#1e6fb8"/><rect x="1198.5" y="100.5" width="19" height="7" fill="#fff" stroke="#1e6fb8"/><path d="M1198.5 107.5h13l5 5-5 5h-13z" fill="#8cc0ee" stroke="#1e6fb8"/>
<path d="M1212 106l12.5 13M1224.5 106l-12.5 13" stroke="#e8604c" stroke-width="1.5"/>
<text class="lbl" x="1208" y="134.5" style="fill:#333" textLength="23" lengthAdjust="spacingAndGlyphs">重複</text><text class="lbl" x="1208" y="149.5" style="fill:#333" textLength="34" lengthAdjust="spacingAndGlyphs">の削除</text>
<rect x="25.5" y="248.5" width="46.5" height="37" rx="5" fill="none" stroke="#f00" stroke-width="7" filter="url(#s2)"/>

<g filter="url(#s2)"><circle cx="317" cy="71" r="23.5" fill="#fff"/></g><circle cx="317" cy="71" r="20.5" fill="none" stroke="#f00" stroke-width="2"/><text class="ann" x="317" y="85.5" textLength="26" lengthAdjust="spacingAndGlyphs">13</text>
<g filter="url(#s2)"><circle cx="1144" cy="87" r="23.5" fill="#fff"/></g><circle cx="1144" cy="87" r="20.5" fill="none" stroke="#f00" stroke-width="2"/><text class="ann" x="1144" y="101.5" textLength="27" lengthAdjust="spacingAndGlyphs">14</text>
<g filter="url(#s2)"><circle cx="101" cy="285" r="23.5" fill="#fff"/></g><circle cx="101" cy="285" r="20.5" fill="none" stroke="#f00" stroke-width="2"/><text class="ann" x="101" y="299.5" textLength="26" lengthAdjust="spacingAndGlyphs">12</text>
</svg>
</body></html>
